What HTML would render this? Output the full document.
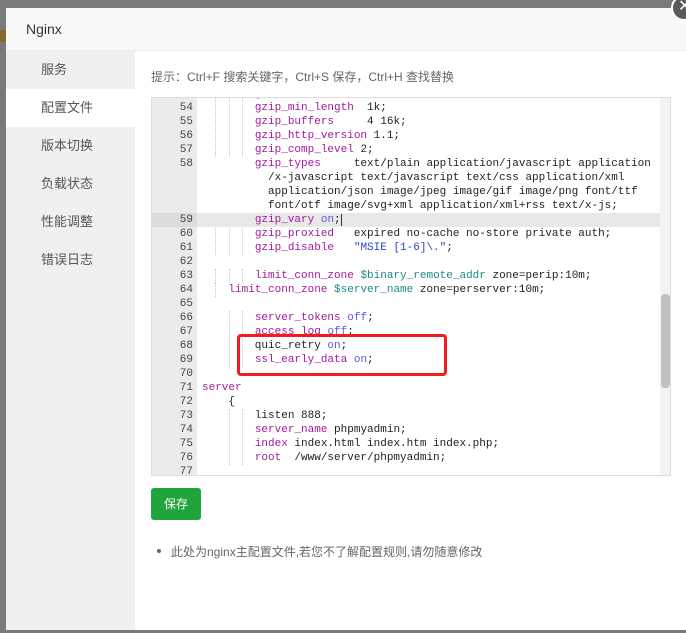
<!DOCTYPE html>
<html><head><meta charset="utf-8"><style>
*{margin:0;padding:0;box-sizing:border-box}
body{width:686px;height:633px;overflow:hidden;background:#7a7a7a;font-family:"Liberation Sans","Noto Sans CJK SC",sans-serif;position:relative}
.dlg{position:absolute;left:6px;top:8px;width:690px;height:622px;background:#fff}
.title{position:absolute;left:0;top:0;width:100%;height:43px;background:#f8f8f8;border-bottom:1px solid #eee;font-size:14px;color:#333;line-height:42px;padding-left:20px}
.side{position:absolute;left:0;top:43px;width:129px;height:579px;background:#f0f0f0}
.side div{position:absolute;left:0;width:129px;height:38px;line-height:38px;padding-left:35px;font-size:13px;color:#555}
.side .act{background:#fff}
.hint{position:absolute;left:151px;top:68px;font-size:12px;color:#666}
.ed{position:absolute;left:151px;top:97px;width:520px;height:379px;border:1px solid #ddd;overflow:hidden;background:#fff}
.gut{position:absolute;left:0;top:0;width:45px;height:100%;background:#ebebeb}
.r{position:absolute;left:0;width:508px;height:14px;font-family:"Liberation Mono",monospace;font-size:11px;line-height:14px;color:#222;white-space:pre}
.r .n{position:absolute;left:0;width:41px;text-align:right;color:#444}
.r .c{position:absolute;left:50px}
.hl{background:#e8e8e8}
.hl .n{background:#dcdcdc;width:45px;padding-right:4px}
.k{color:#a31b9b}.a{color:#5a5ae6}.v{color:#1f8a8a}.s{color:#2d45c8}
.g{position:absolute;width:0;border-left:1px dotted #c8c8c8}
.sb{position:absolute;right:0;top:0;width:10px;height:100%;background:#f3f3f3}
.th{position:absolute;left:1px;top:196px;width:9px;height:94px;background:#c1c1c1;border-radius:4px}
.box{position:absolute;left:237px;top:334px;width:210px;height:42px;border:3px solid #f21c1c;border-radius:4px}
.btn{position:absolute;left:151px;top:488px;width:50px;height:32px;background:#20a53a;border-radius:3px;color:#fff;font-size:12px;line-height:32px;text-align:center}
.note{position:absolute;left:171px;top:543px;font-size:12px;color:#666}
.dot{position:absolute;left:157px;top:549px;width:4px;height:4px;border-radius:2px;background:#666}
.x{position:absolute;left:671px;top:-5px;width:26px;height:26px;border-radius:13px;background:#5a5a5a;border:2px solid #fff;color:#fff;font-size:16px;line-height:20px;padding-left:5px}
</style></head><body>
<div style="position:absolute;left:0;top:30px;width:6px;height:12px;background:#8a6a2a"></div>
<div class="dlg">
<div class="title">Nginx</div>
<div class="side">
<div style="top:0">服务</div>
<div class="act" style="top:38px">配置文件</div>
<div style="top:76px">版本切换</div>
<div style="top:114px">负载状态</div>
<div style="top:152px">性能调整</div>
<div style="top:190px">错误日志</div>
</div>
</div>
<div class="x">✕</div>
<div class="hint">提示：Ctrl+F 搜索关键字，Ctrl+S 保存，Ctrl+H 查找替换</div>
<div class="ed">
<div class="gut"></div>
<div class="g" style="left:63px;top:0;height:59px"></div><div class="g" style="left:77px;top:0;height:59px"></div><div class="g" style="left:90px;top:0;height:59px"></div>
<div class="g" style="left:63px;top:115px;height:42px"></div><div class="g" style="left:77px;top:115px;height:42px"></div><div class="g" style="left:90px;top:115px;height:42px"></div>
<div class="g" style="left:63px;top:171px;height:14px"></div><div class="g" style="left:77px;top:171px;height:14px"></div><div class="g" style="left:90px;top:171px;height:14px"></div>
<div class="g" style="left:63px;top:185px;height:14px"></div>
<div class="g" style="left:77px;top:213px;height:56px"></div><div class="g" style="left:90px;top:213px;height:56px"></div>
<div class="g" style="left:77px;top:311px;height:56px"></div><div class="g" style="left:90px;top:311px;height:56px"></div>
<div class="r" style="top:-11px"><span class="n">53</span><span class="c">        <span class="k">gzip</span> <span class="a">on</span>;</span></div>
<div class="r" style="top:3px"><span class="n">54</span><span class="c">        <span class="k">gzip_min_length</span>  1k;</span></div>
<div class="r" style="top:17px"><span class="n">55</span><span class="c">        <span class="k">gzip_buffers</span>     4 16k;</span></div>
<div class="r" style="top:31px"><span class="n">56</span><span class="c">        <span class="k">gzip_http_version</span> 1.1;</span></div>
<div class="r" style="top:45px"><span class="n">57</span><span class="c">        <span class="k">gzip_comp_level</span> 2;</span></div>
<div class="r" style="top:59px"><span class="n">58</span><span class="c">        <span class="k">gzip_types</span>     text/plain application/javascript application</span></div>
<div class="r" style="top:73px"><span class="c">          /x-javascript text/javascript text/css application/xml</span></div>
<div class="r" style="top:87px"><span class="c">          application/json image/jpeg image/gif image/png font/ttf</span></div>
<div class="r" style="top:101px"><span class="c">          font/otf image/svg+xml application/xml+rss text/x-js;</span></div>
<div class="r hl" style="top:115px"><span class="n">59</span><span class="c">        <span class="k">gzip_vary</span> <span class="a">on</span>;<span style="border-left:1px solid #333"></span></span></div>
<div class="r" style="top:129px"><span class="n">60</span><span class="c">        <span class="k">gzip_proxied</span>   expired no-cache no-store private auth;</span></div>
<div class="r" style="top:143px"><span class="n">61</span><span class="c">        <span class="k">gzip_disable</span>   <span class="s">"MSIE [1-6]\."</span>;</span></div>
<div class="r" style="top:157px"><span class="n">62</span></div>
<div class="r" style="top:171px"><span class="n">63</span><span class="c">        <span class="k">limit_conn_zone</span> <span class="v">$binary_remote_addr</span> zone=perip:10m;</span></div>
<div class="r" style="top:185px"><span class="n">64</span><span class="c">    <span class="k">limit_conn_zone</span> <span class="v">$server_name</span> zone=perserver:10m;</span></div>
<div class="r" style="top:199px"><span class="n">65</span></div>
<div class="r" style="top:213px"><span class="n">66</span><span class="c">        <span class="k">server_tokens</span> <span class="a">off</span>;</span></div>
<div class="r" style="top:227px"><span class="n">67</span><span class="c">        <span class="k">access_log</span> <span class="a">off</span>;</span></div>
<div class="r" style="top:241px"><span class="n">68</span><span class="c">        quic_retry <span class="a">on</span>;</span></div>
<div class="r" style="top:255px"><span class="n">69</span><span class="c">        <span class="k">ssl_early_data</span> <span class="a">on</span>;</span></div>
<div class="r" style="top:269px"><span class="n">70</span></div>
<div class="r" style="top:283px"><span class="n">71</span><span class="c"><span class="k">server</span></span></div>
<div class="r" style="top:297px"><span class="n">72</span><span class="c">    {</span></div>
<div class="r" style="top:311px"><span class="n">73</span><span class="c">        listen 888;</span></div>
<div class="r" style="top:325px"><span class="n">74</span><span class="c">        <span class="k">server_name</span> phpmyadmin;</span></div>
<div class="r" style="top:339px"><span class="n">75</span><span class="c">        <span class="k">index</span> index.html index.htm index.php;</span></div>
<div class="r" style="top:353px"><span class="n">76</span><span class="c">        <span class="k">root</span>  /www/server/phpmyadmin;</span></div>
<div class="r" style="top:367px"><span class="n">77</span></div>
<div class="sb"><div class="th"></div></div>
</div>
<div class="box"></div>
<div class="btn">保存</div>
<div class="dot"></div>
<div class="note">此处为nginx主配置文件,若您不了解配置规则,请勿随意修改</div>
</body></html>
